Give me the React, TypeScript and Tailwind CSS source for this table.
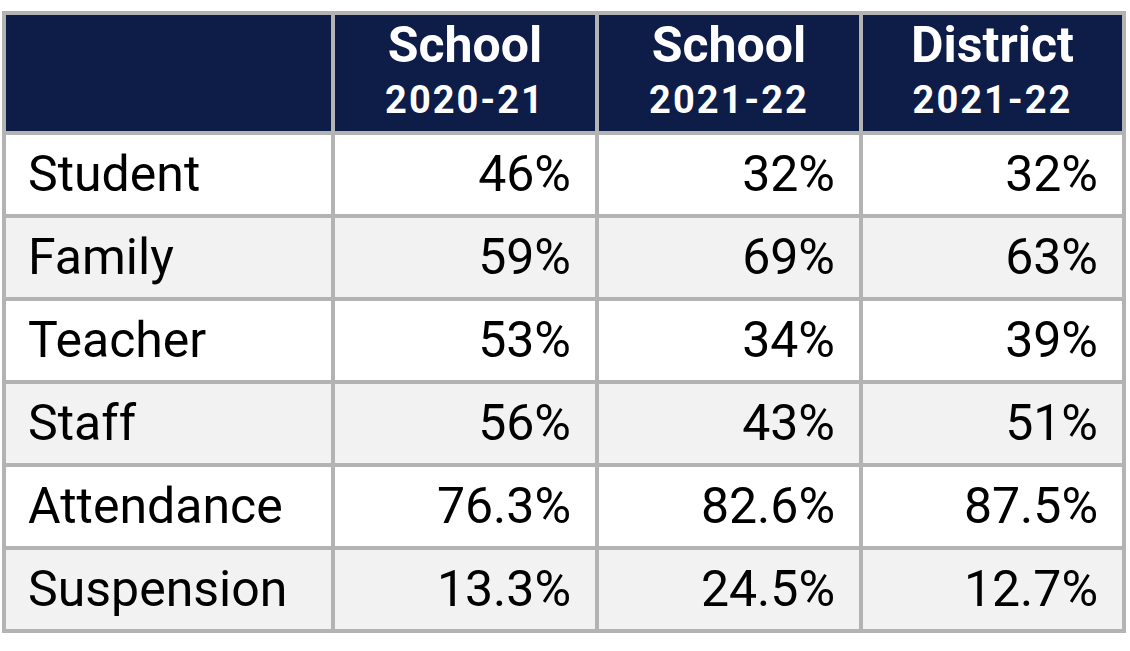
import React from 'react';

const HEADERS = [
  { title: 'School', year: '2020-21' },
  { title: 'School', year: '2021-22' },
  { title: 'District', year: '2021-22' },
];

const ROWS = [
  { label: 'Student', values: ['46%', '32%', '32%'] },
  { label: 'Family', values: ['59%', '69%', '63%'] },
  { label: 'Teacher', values: ['53%', '34%', '39%'] },
  { label: 'Staff', values: ['56%', '43%', '51%'] },
  { label: 'Attendance', values: ['76.3%', '82.6%', '87.5%'] },
  { label: 'Suspension', values: ['13.3%', '24.5%', '12.7%'] },
];

export default function App() {
  return (
    <div className="w-[1130px] h-[651px] bg-white font-['Roboto',sans-serif] overflow-hidden">
      <div className="ml-[2px] mt-[11px] w-[1124px] bg-[#b3b3b3] p-[4px] grid grid-cols-[325px_260px_260px_259px] grid-rows-[116px_repeat(6,79px)] gap-[4px]">
        {/* Header row */}
        <div className="bg-[#0e1c48]" />
        {HEADERS.map((h, i) => (
          <div key={i} className="bg-[#0e1c48] flex flex-col items-center pt-[5px] text-white font-bold">
            <div className="text-[50px] leading-[50px]">{h.title}</div>
            <div className="mt-[11px] text-[38px] leading-[38px] tracking-[2px]">{h.year}</div>
          </div>
        ))}

        {/* Data rows */}
        {ROWS.map((r, ri) => {
          const bg = ri % 2 === 0 ? 'bg-white' : 'bg-[#f2f2f2]';
          return (
            <React.Fragment key={r.label}>
              <div className={`${bg} flex items-center pl-[22px] text-[50px] text-black`}>{r.label}</div>
              {r.values.map((v, vi) => (
                <div key={vi} className={`${bg} flex items-center justify-end pr-[24px] text-[50px] text-black`}>{v}</div>
              ))}
            </React.Fragment>
          );
        })}
      </div>
    </div>
  );
}
